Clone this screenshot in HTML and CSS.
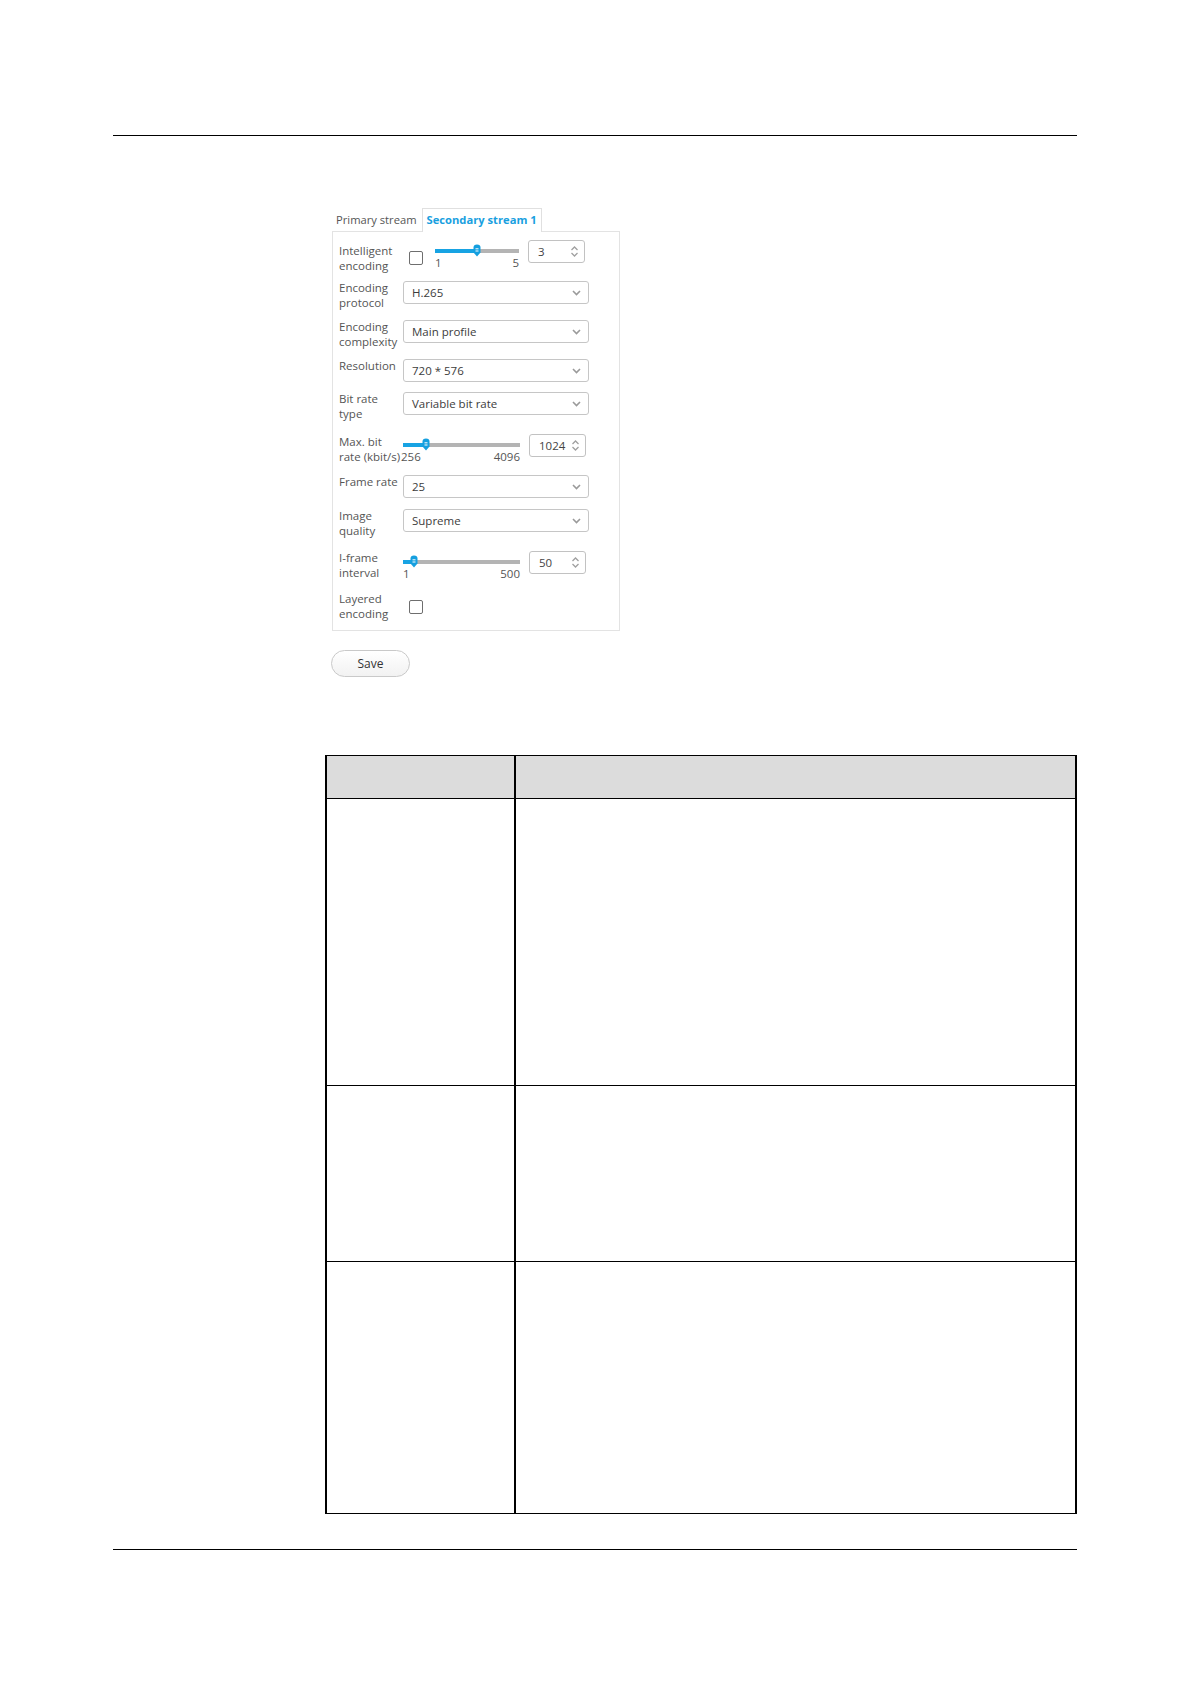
FILE: index.html
```html
<!DOCTYPE html>
<html lang="en">
<head>
<meta charset="utf-8">
<title>Secondary stream 1</title>
<link rel="stylesheet" href="styles.css">
</head>
<body>
<div class="page">
  <hr class="rule">
  <div class="figure">
    <div class="tabs">
      <div class="tab">Primary stream</div>
      <div class="tab tab-active">Secondary stream 1</div>
    </div>
    <div class="panel">
      <div class="form">
        <div class="label label-r1">Intelligent<br>encoding</div>
        <div class="ctrl">
          <span class="checkbox cb-r1"></span>
          <div class="slider slider-short">
            <div class="track"><div class="fill" style="width:50%"></div><svg class="thumb" style="left:50%" width="8" height="13" viewBox="0 0 8 13"><path d="M0.5 3.5 Q0.5 0.5 4 0.5 Q7.5 0.5 7.5 3.5 V8.5 L4 12.5 L0.5 8.5 Z" fill="#159fdf"/><rect x="2.5" y="4.3" width="3" height="1" fill="#fff"/><rect x="2.5" y="6.5" width="3" height="1" fill="#fff"/></svg></div>
            <div class="ticks"><span>1</span><span>5</span></div>
          </div>
          <div class="number"><span>3</span><svg class="spin" width="9" height="13" viewBox="0 0 9 13"><path d="M1.5 5 L4.5 2 L7.5 5 M1.5 8 L4.5 11 L7.5 8" fill="none" stroke="#a0a0a0" stroke-width="1.3"/></svg></div>
        </div>

        <div class="label">Encoding<br>protocol</div>
        <div class="ctrl"><div class="select"><span>H.265</span><svg width="9" height="6" viewBox="0 0 9 6"><path d="M1 1 L4.5 4.5 L8 1" fill="none" stroke="#9a9a9a" stroke-width="1.6"/></svg></div></div>

        <div class="label">Encoding<br>complexity</div>
        <div class="ctrl"><div class="select"><span>Main profile</span><svg width="9" height="6" viewBox="0 0 9 6"><path d="M1 1 L4.5 4.5 L8 1" fill="none" stroke="#9a9a9a" stroke-width="1.6"/></svg></div></div>

        <div class="label">Resolution</div>
        <div class="ctrl"><div class="select"><span>720 * 576</span><svg width="9" height="6" viewBox="0 0 9 6"><path d="M1 1 L4.5 4.5 L8 1" fill="none" stroke="#9a9a9a" stroke-width="1.6"/></svg></div></div>

        <div class="label">Bit rate<br>type</div>
        <div class="ctrl"><div class="select"><span>Variable bit rate</span><svg width="9" height="6" viewBox="0 0 9 6"><path d="M1 1 L4.5 4.5 L8 1" fill="none" stroke="#9a9a9a" stroke-width="1.6"/></svg></div></div>

        <div class="label label-r6">Max. bit<br>rate (kbit/s)</div>
        <div class="ctrl">
          <div class="slider slider-long">
            <div class="track"><div class="fill" style="width:20%"></div><svg class="thumb" style="left:20%" width="8" height="13" viewBox="0 0 8 13"><path d="M0.5 3.5 Q0.5 0.5 4 0.5 Q7.5 0.5 7.5 3.5 V8.5 L4 12.5 L0.5 8.5 Z" fill="#159fdf"/><rect x="2.5" y="4.3" width="3" height="1" fill="#fff"/><rect x="2.5" y="6.5" width="3" height="1" fill="#fff"/></svg></div>
            <div class="ticks ticks-wide"><span>256</span><span>4096</span></div>
          </div>
          <div class="number"><span>1024</span><svg class="spin" width="9" height="13" viewBox="0 0 9 13"><path d="M1.5 5 L4.5 2 L7.5 5 M1.5 8 L4.5 11 L7.5 8" fill="none" stroke="#a0a0a0" stroke-width="1.3"/></svg></div>
        </div>

        <div class="label">Frame rate</div>
        <div class="ctrl"><div class="select"><span>25</span><svg width="9" height="6" viewBox="0 0 9 6"><path d="M1 1 L4.5 4.5 L8 1" fill="none" stroke="#9a9a9a" stroke-width="1.6"/></svg></div></div>

        <div class="label">Image<br>quality</div>
        <div class="ctrl"><div class="select"><span>Supreme</span><svg width="9" height="6" viewBox="0 0 9 6"><path d="M1 1 L4.5 4.5 L8 1" fill="none" stroke="#9a9a9a" stroke-width="1.6"/></svg></div></div>

        <div class="label">I-frame<br>interval</div>
        <div class="ctrl">
          <div class="slider slider-long">
            <div class="track"><div class="fill" style="width:9.8%"></div><svg class="thumb" style="left:9.8%" width="8" height="13" viewBox="0 0 8 13"><path d="M0.5 3.5 Q0.5 0.5 4 0.5 Q7.5 0.5 7.5 3.5 V8.5 L4 12.5 L0.5 8.5 Z" fill="#159fdf"/><rect x="2.5" y="4.3" width="3" height="1" fill="#fff"/><rect x="2.5" y="6.5" width="3" height="1" fill="#fff"/></svg></div>
            <div class="ticks"><span>1</span><span>500</span></div>
          </div>
          <div class="number"><span>50</span><svg class="spin" width="9" height="13" viewBox="0 0 9 13"><path d="M1.5 5 L4.5 2 L7.5 5 M1.5 8 L4.5 11 L7.5 8" fill="none" stroke="#a0a0a0" stroke-width="1.3"/></svg></div>
        </div>

        <div class="label">Layered<br>encoding</div>
        <div class="ctrl"><span class="checkbox cb-r10"></span></div>
      </div>
    </div>
    <button class="save" type="button">Save</button>
  </div>

  <table class="params">
    <thead>
      <tr class="row-head"><th class="col-a"></th><th class="col-b"></th></tr>
    </thead>
    <tbody>
      <tr class="row-1"><td></td><td></td></tr>
      <tr class="row-2"><td></td><td></td></tr>
      <tr class="row-3"><td></td><td></td></tr>
    </tbody>
  </table>

  <hr class="rule rule-bottom">
</div>
</body>
</html>
```

FILE: styles.css
```css
html, body {
  margin: 0;
  padding: 0;
  background: #fff;
}

body {
  font-family: "Open Sans", "Noto Sans", sans-serif;
  color: #333;
}

.page {
  width: 1191px;
  padding-top: 135px;
}

.rule {
  margin: 0 0 0 113px;
  width: 964px;
  height: 0;
  border: 0;
  border-top: 1px solid #000;
}

.rule-bottom {
  margin-top: 35px;
}

.figure {
  margin: 72px 0 0 332px;
}

.tabs {
  display: flex;
  height: 24px;
  margin-bottom: -1px;
}

.tab {
  box-sizing: border-box;
  height: 24px;
  padding: 1px 5px 0 4px;
  font-size: 11.2px;
  line-height: 22px;
  color: #555;
  white-space: nowrap;
}

.tab-active {
  position: relative;
  z-index: 1;
  padding: 0 4px;
  background: #fff;
  border: 1px solid #e0e0e0;
  border-bottom: 0;
  color: #199fe0;
  font-weight: 700;
}

.panel {
  width: 288px;
  box-sizing: border-box;
  border: 1px solid #e3e3e3;
  padding: 8px 0 9px 6px;
}

.form {
  display: grid;
  grid-template-columns: 64px 1fr;
  grid-template-rows: 41px 39px 39px 33px 42px 41px 34px 42px 41px 29px;
}

.label {
  font-size: 11.5px;
  line-height: 14.5px;
  color: #555;
  white-space: nowrap;
}

.label-r1 {
  padding-top: 4px;
}

.label-r6 {
  padding-top: 1px;
}

.ctrl {
  display: flex;
  align-items: flex-start;
}

.checkbox {
  display: block;
  width: 14px;
  height: 14px;
  box-sizing: border-box;
  border: 1px solid #6e6e6e;
  border-radius: 2px;
  background: #fff;
}

.cb-r1 {
  margin: 11px 12px 0 6px;
}

.cb-r10 {
  margin: 8px 0 0 6px;
}

.slider {
  margin: 9px 9px 0 0;
}

.slider-short {
  width: 84px;
}

.slider-long {
  width: 117px;
}

.track {
  position: relative;
  height: 4px;
  background: #b4b4b4;
}

.fill {
  height: 100%;
  background: #17a3e3;
}

.thumb {
  position: absolute;
  top: -5px;
  margin-left: -4px;
  display: block;
}

.ticks {
  display: flex;
  justify-content: space-between;
  margin-top: 3px;
  font-size: 11.5px;
  line-height: 14px;
  color: #555;
}

.ticks-wide {
  margin-left: -2px;
}

.number {
  width: 57px;
  height: 23px;
  box-sizing: border-box;
  border: 1px solid #c2c2c2;
  border-radius: 3px;
  display: flex;
  align-items: center;
  justify-content: space-between;
  padding: 0 5px 0 9px;
  font-size: 11.5px;
  color: #444;
}

.spin {
  display: block;
}

.select {
  width: 186px;
  height: 23px;
  box-sizing: border-box;
  border: 1px solid #c6c6c6;
  border-radius: 3px;
  display: flex;
  align-items: center;
  justify-content: space-between;
  padding: 0 7px 0 8px;
  font-size: 11.5px;
  color: #3c3c3c;
}

.select svg {
  display: block;
}

.save {
  display: block;
  margin: 19px 0 0 -1px;
  width: 79px;
  height: 27px;
  box-sizing: border-box;
  padding: 0;
  border: 1px solid #c9c9c9;
  border-radius: 14px;
  background: linear-gradient(#ffffff, #f2f2f2);
  font-family: "Open Sans", "Noto Sans", sans-serif;
  font-size: 12px;
  color: #333;
}

.params {
  margin: 78px 0 0 325px;
  width: 752px;
  border-collapse: collapse;
  border-left: 2px solid #000;
  border-right: 2px solid #000;
  border-top: 1px solid #000;
  border-bottom: 1px solid #000;
}

.params th,
.params td {
  padding: 0;
  border-left: 2px solid #000;
  border-right: 2px solid #000;
  border-top: 1px solid #000;
  border-bottom: 1px solid #000;
}

.params th {
  background: #dcdcdc;
}

.col-a {
  width: 187px;
}

.row-head {
  height: 43px;
}

.row-1 {
  height: 287px;
}

.row-2 {
  height: 176px;
}

.row-3 {
  height: 252px;
}
```
